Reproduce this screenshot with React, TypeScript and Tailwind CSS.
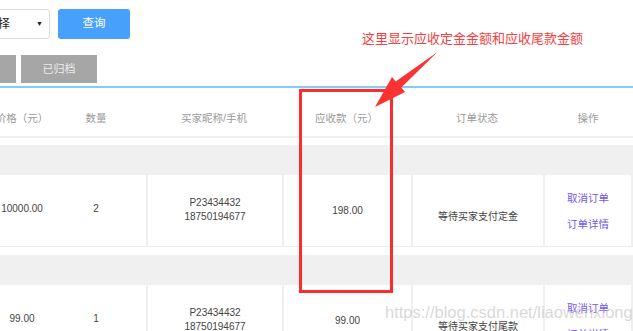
import React from "react";

const orders = [
  {
    price: "10000.00",
    qty: "2",
    buyer: "P23434432",
    phone: "18750194677",
    due: "198.00",
    status: "等待买家支付定金",
  },
  {
    price: "99.00",
    qty: "1",
    buyer: "P23434432",
    phone: "18750194677",
    due: "99.00",
    status: "等待买家支付尾款",
  },
];

function OrderRow({ order }: { order: (typeof orders)[0] }) {
  return (
    <>
      {/* group bar */}
      <div className="h-[30px] bg-[#f0f0f0]" />
      <div className="flex h-[72px] border-b border-[#ececec] text-[10px] text-[#444]">
        <div className="flex w-[146px] items-center pb-[4px]">
          <span className="ml-[-18px] w-[80px] text-center">{order.price}</span>
          <span className="w-[68px] text-center">{order.qty}</span>
        </div>
        <div className="flex w-[136px] flex-col items-center justify-center border-l-2 border-[#efefef] pb-[2px] leading-[14px]">
          <span>{order.buyer}</span>
          <span>{order.phone}</span>
        </div>
        <div className="flex w-[129px] items-center justify-center border-l-2 border-[#efefef]">
          {order.due}
        </div>
        <div className="flex w-[132px] items-center justify-center border-l-2 border-[#efefef] pt-[12px]">
          {order.status}
        </div>
        <div className="flex w-[90px] flex-col items-center justify-center gap-[12px] border-x-2 border-[#efefef] text-[10.5px] leading-[14px] text-[#7356f1]">
          <a>取消订单</a>
          <a>订单详情</a>
        </div>
      </div>
    </>
  );
}

export default function App() {
  return (
    <div className="relative h-[331px] w-[633px] overflow-hidden bg-white font-['Liberation_Sans','Noto_Sans_CJK_SC',sans-serif]">
      {/* search bar */}
      <div className="flex pt-[9px]">
        <div className="ml-[-40px] flex h-[30px] w-[90px] items-center justify-between rounded-[3px] border border-[#dcdcdc] pl-[13px] pr-[6px] text-[12px] text-[#222]">
          <span>请选择</span>
          <span className="text-[7px]">▼</span>
        </div>
        <button className="ml-[8px] h-[30px] w-[72px] rounded-[3px] bg-[#47a0fb] text-[11.5px] text-white">
          查询
        </button>
      </div>

      {/* tabs */}
      <div className="mt-[16px] flex h-[28px] text-[11px] text-[#ececec]">
        <div className="ml-[-60px] flex w-[76px] items-center justify-center bg-[#a6a6a6]">全部</div>
        <div className="ml-[5px] flex w-[76px] items-center justify-center bg-[#a6a6a6]">已归档</div>
      </div>
      <div className="mt-[3px] h-[2px] bg-[#82cdf6]" />

      {/* table head */}
      <div className="flex h-[50px] items-center border-b-2 border-[#efefef] pt-[14px] text-[10.5px] text-[#9a9a9a]">
        <div className="flex w-[146px]">
          <span className="ml-[-18px] w-[80px] text-center">价格（元）</span>
          <span className="w-[68px] text-center">数量</span>
        </div>
        <span className="w-[136px] text-center">买家昵称/手机</span>
        <span className="w-[129px] text-center">应收款（元）</span>
        <span className="w-[132px] text-center">订单状态</span>
        <span className="w-[90px] text-center">操作</span>
      </div>

      <div className="mt-[7px] flex flex-col">
        <OrderRow order={orders[0]} />
        <div className="h-[8px]" />
        <OrderRow order={orders[1]} />
      </div>

      {/* watermark */}
      <div className="pointer-events-none absolute left-[385px] top-[304px] whitespace-nowrap text-[16.5px] leading-none text-[#bebebe]/60">
        https://blog.csdn.net/liaowenxiong
      </div>

      {/* annotation */}
      <div className="absolute left-[362px] top-[30px] whitespace-nowrap text-[13px] leading-[17px] text-[#f5403f]">
        这里显示应收定金金额和应收尾款金额
      </div>
      <div className="pointer-events-none absolute left-[299px] top-[89px] h-[204px] w-[94px] border-[3px] border-[#fd2b2b]" />
      <svg className="pointer-events-none absolute left-0 top-0" width="633" height="331" viewBox="0 0 633 331">
        <polygon
          points="437.5,52 401.3,87.4 405,92 375,107 392,77 395.7,81.6"
          fill="#fb3232"
        />
      </svg>
    </div>
  );
}
